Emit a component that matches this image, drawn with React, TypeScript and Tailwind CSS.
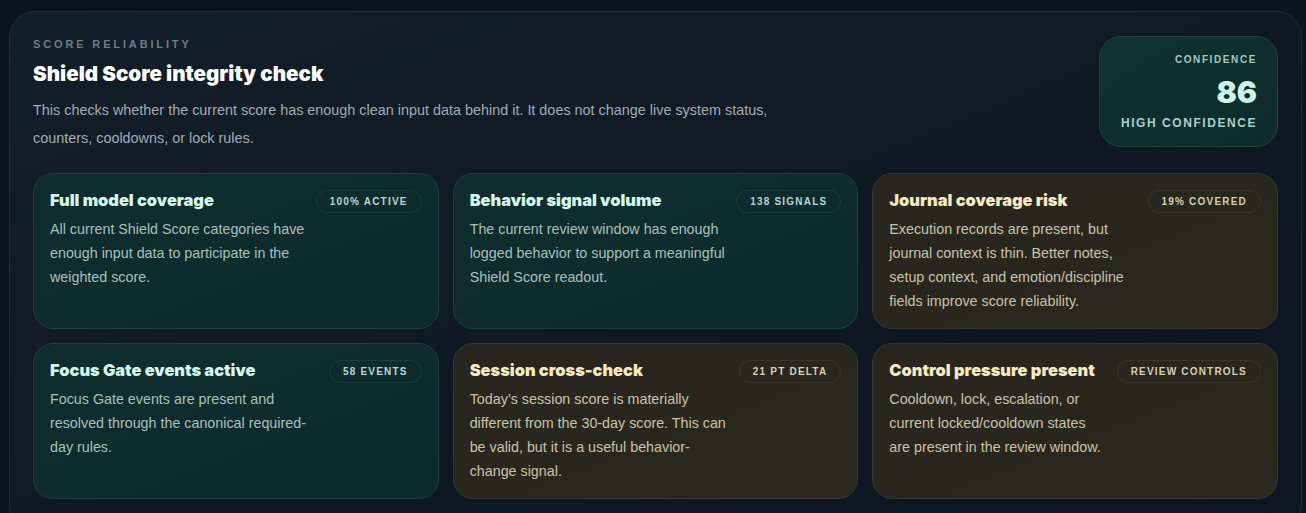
import React from "react";

type Card = { title: string; badge: string; body: string; tone: "teal" | "amber" };

const cards: Card[] = [
  { title: "Full model coverage", badge: "100% ACTIVE", tone: "teal", body: "All current Shield Score categories have enough input data to participate in the weighted score." },
  { title: "Behavior signal volume", badge: "138 SIGNALS", tone: "teal", body: "The current review window has enough logged behavior to support a meaningful Shield Score readout." },
  { title: "Journal coverage risk", badge: "19% COVERED", tone: "amber", body: "Execution records are present, but journal context is thin. Better notes, setup context, and emotion/discipline fields improve score reliability." },
  { title: "Focus Gate events active", badge: "58 EVENTS", tone: "teal", body: "Focus Gate events are present and resolved through the canonical required-day rules." },
  { title: "Session cross-check", badge: "21 PT DELTA", tone: "amber", body: "Today\u2019s session score is materially different from the 30-day score. This can be valid, but it is a useful behavior-change signal." },
  { title: "Control pressure present", badge: "REVIEW CONTROLS", tone: "amber", body: "Cooldown, lock, escalation, or current locked/cooldown states are present in the review window." },
];

const heavy = { fontFamily: "Inter, 'Liberation Sans', sans-serif" };

function CardView({ c }: { c: Card }) {
  const teal = c.tone === "teal";
  return (
    <div
      className={
        "flex h-[156px] items-start gap-[10px] rounded-[20px] border px-[16px] pt-[14px] " +
        (teal
          ? "border-[#1b3f40] bg-gradient-to-br from-[#0f2c2f] to-[#0d2a2b]"
          : "border-[#38372b] bg-gradient-to-br from-[#26261f] to-[#2a281d]")
      }
    >
      <div className="min-w-0 flex-1">
        <div
          className={
            "text-[16.4px] leading-[24px] font-black " +
            (teal ? "text-[#d5f7ea]" : "text-[#f8eabf]")
          }
          style={heavy}
        >
          {c.title}
        </div>
        <p
          className={
            "mt-[5px] text-[14.3px] leading-[24px] " +
            (teal ? "text-[#a8c0bc]" : "text-[#c8c3a6]")
          }
        >
          {c.body}
        </p>
      </div>
      <div
        className={
          "mt-[2px] flex h-[23px] shrink-0 items-center rounded-full border px-[13px] text-[10px] font-bold tracking-[0.12em] " +
          (teal ? "border-[#1b3d3e] text-[#b9d6cf]" : "border-[#373628] text-[#d6d0b4]")
        }
      >
        {c.badge}
      </div>
    </div>
  );
}

export default function App() {
  return (
    <div
      className="min-h-[513px] bg-[#0b1520] pl-[9px] pr-[4px] pt-[11px]"
      style={{ fontFamily: "'Liberation Sans', Arial, sans-serif" }}
    >
      <div className="h-[520px] rounded-[26px] border border-[#1e2a35] bg-gradient-to-br from-[#121e29] via-[#0f1923] to-[#0d1620] px-[23px] pt-[25px]">
        <div className="flex items-start justify-between">
          <div>
            <div className="text-[11px] font-bold leading-[14px] tracking-[0.26em] text-[#6f7d87]">SCORE RELIABILITY</div>
            <div className="mt-[10px] text-[20.6px] font-black leading-[26px] text-white" style={heavy}>
              Shield Score integrity check
            </div>
            <p className="mt-[9px] max-w-[780px] text-[14.4px] leading-[28px] text-[#a1abb4]">
              This checks whether the current score has enough clean input data behind it. It does not change live system status, counters, cooldowns, or lock rules.
            </p>
          </div>
          <div className="-mt-[1px] flex h-[111px] w-[179px] flex-col items-end rounded-[22px] border border-[#1c4340] bg-gradient-to-br from-[#0f3230] to-[#0e2b2b] pr-[20px] pt-[17px]">
            <div className="text-[10px] font-bold leading-[12px] tracking-[0.16em] text-[#9fc9be]">CONFIDENCE</div>
            <div className="mt-[9px] text-[30px] font-black leading-[34px] text-[#cdf6e8]" style={heavy}>
              86
            </div>
            <div className="mt-[6px] text-[12px] font-bold leading-[16px] tracking-[0.13em] text-[#a7d2c6]">HIGH CONFIDENCE</div>
          </div>
        </div>
        <div className="mt-[21px] grid grid-cols-3 gap-[14px]">
          {cards.map((c) => (
            <CardView key={c.title} c={c} />
          ))}
        </div>
      </div>
    </div>
  );
}
